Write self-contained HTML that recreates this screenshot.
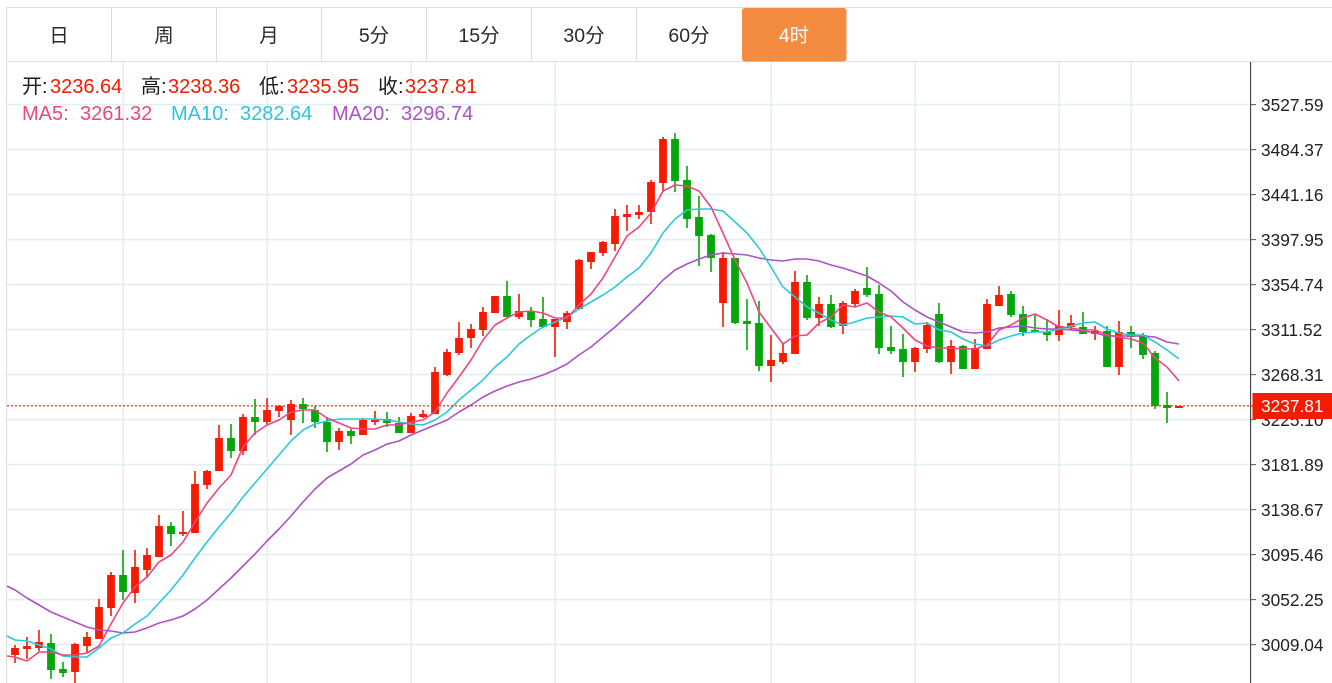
<!DOCTYPE html>
<html>
<head>
<meta charset="utf-8">
<style>
html,body{margin:0;padding:0;background:#fff;width:1332px;height:683px;overflow:hidden}
svg{display:block;font-family:"Liberation Sans","Noto Sans CJK SC",sans-serif}
.t{font-size:19.5px;fill:#2a2a2a;text-anchor:middle}
.a{font-size:17.3px;fill:#222}
.i{font-size:20px}
</style>
</head>
<body>
<svg width="1332" height="683" viewBox="0 0 1332 683" xmlns="http://www.w3.org/2000/svg">
<!-- grid -->
<path fill="none" stroke="#e3edf4" stroke-width="1.6" d="M7 104.6H1250M7 149.6H1250M7 194.6H1250M7 239.6H1250M7 284.6H1250M7 329.6H1250M7 374.6H1250M7 419.6H1250M7 464.6H1250M7 509.6H1250M7 554.6H1250M7 599.6H1250M7 644.6H1250M123.4 62V683M267.4 62V683M411.4 62V683M555.4 62V683M771.4 62V683M915.4 62V683M1059.4 62V683M1131.4 62V683"/>
<!-- tabs frame -->
<path fill="none" stroke="#dedede" stroke-width="1" d="M6 7.5H1332M6 61.5H1332M6.5 7V683"/>
<path fill="none" stroke="#dcdcdc" stroke-width="1" d="M111.5 8V61M216.5 8V61M321.5 8V61M426.5 8V61M531.5 8V61M636.5 8V61"/>
<rect x="742" y="8" width="104.5" height="53.5" rx="3" fill="#f38b41"/>
<text class="t" x="59" y="42">日</text>
<text class="t" x="164" y="42">周</text>
<text class="t" x="269" y="42">月</text>
<text class="t" x="374" y="42">5分</text>
<text class="t" x="479" y="42">15分</text>
<text class="t" x="584" y="42">30分</text>
<text class="t" x="689" y="42">60分</text>
<text class="t" x="794" y="42" style="fill:#fff">4时</text>
<!-- candles -->
<path fill="none" stroke="#f51a00" stroke-width="1.6" d="M15 645V663M27 637V659M39 630V651M75 643V683M87 632V653M99 599V639M111 572V616M135 550V603M147 548V578M159 515V557M183 511V536M195 471V533M207 470V489M219 425V471M243 414V455M267 398V425M279 405V417M291 400V435M339 428V450M363 418V435M375 411V425M411 413V433M423 410V418M435 367V414M447 349V376M459 322V355M471 324V348M483 307V336M519 294V319M555 319V357M567 311V329M579 259V310M591 252V269M603 241V256M615 209V251M627 205V231M639 205V219M651 180V224M663 137V192M723 252V327M771 335V382M783 344V364M795 271V354M819 297V326M843 301V334M855 289V307M915 347V372M927 322V353M951 340V374M975 339V369M987 299V349M999 286V306M1059 310V341M1071 315V330M1095 326V340M1119 321V375"/>
<path fill="none" stroke="#f51a00" stroke-width="7.8" d="M15 648V655M27 646V649M39 642V648M75 644V672M87 637V646M99 607V639M111 575V608M135 567V593M147 555V570M159 526V557M183 532V534M195 484V533M207 471V485M219 438V471M243 417V451M267 410V422M279 406V411M291 404V420M339 431V442M363 420V435M375 420V422M411 416V433M423 414V417M435 372V414M447 352V375M459 338V353M471 329V338M483 312V330M495 296V313M519 311V317M555 319V327M567 313V322M579 260V309M591 252V262M603 242V253M615 216V244M627 214V217M639 212V215M651 182V212M663 139V183M723 258V303M771 360V366M783 353V362M795 282V354M819 304V318M843 303V326M855 291V304M915 348V362M927 325V349M951 346V362M975 348V369M987 304V349M999 295V306M1059 326V335M1071 323V327M1095 331V334M1119 332V367M1179 406V408"/>
<path fill="none" stroke="#04a60a" stroke-width="1.6" d="M51 634V679M63 662V677M123 550V600M171 522V546M231 424V458M255 399V435M303 398V423M315 406V428M327 417V452M351 429V444M387 412V427M399 417V433M507 281V317M531 307V327M543 297V328M675 133V192M687 166V228M699 196V266M711 234V272M735 258V324M747 299V350M759 301V371M807 275V320M831 295V328M867 267V297M879 285V354M891 326V354M903 334V377M939 303V363M963 345V369M1011 291V317M1023 306V336M1035 315V332M1047 319V341M1083 312V334M1107 326V367M1131 326V348M1143 333V359M1155 351V409M1167 392V423"/>
<path fill="none" stroke="#04a60a" stroke-width="7.8" d="M51 643V670M63 669V673M123 575V592M171 526V534M231 438V451M255 417V422M303 404V409M315 410V422M327 422V442M351 431V436M387 419V423M399 423V433M507 296V317M531 311V320M543 319V327M675 139V181M687 180V219M699 217V236M711 235V258M735 258V323M747 321V324M759 323V366M807 282V318M831 304V327M867 288V295M879 294V348M891 347V351M903 349V362M939 314V362M963 346V369M1011 294V315M1023 314V332M1035 330V332M1047 332V335M1083 327V334M1107 331V367M1131 332V337M1143 335V355M1155 353V406M1167 405V408"/>
<!-- moving averages -->
<polyline fill="none" stroke="#ab52c4" stroke-width="1.6" stroke-linejoin="round" points="7,586 15,590 27,598 39,605 51,612 63,617 75,622 87,627 99,630 111,631 123,633 135,632 147,628 159,623 171,620 183,616 195,609 207,600 219,589 231,578 243,566 255,554 267,541 279,529 291,516 303,502 315,489 327,478 339,471 351,464 363,455 375,450 387,444 399,441 411,435 423,430 435,425 447,420 459,412 471,405 483,397 495,391 507,386 519,382 531,379 543,375 555,370 567,364 579,355 591,347 603,337 615,327 627,316 639,305 651,293 663,280 675,270 687,264 699,259 711,255 723,253 735,254 747,255 759,258 771,260 783,261 795,259 807,259 819,261 831,265 843,268 855,272 867,276 879,283 891,291 903,302 915,310 927,317 939,322 951,327 963,332 975,333 987,332 999,328 1011,327 1023,326 1035,328 1047,329 1059,329 1071,330 1083,331 1095,333 1107,336 1119,336 1131,336 1143,336 1155,337 1167,342 1179,344"/>
<polyline fill="none" stroke="#2cc6de" stroke-width="1.6" stroke-linejoin="round" points="7,636 15,640 27,641 39,645 51,649 63,656 75,657 87,657 99,648 111,638 123,633 135,624 147,616 159,603 171,590 183,575 195,558 207,542 219,527 231,513 243,497 255,483 267,469 279,455 291,441 303,430 315,424 327,421 339,419 351,419 363,419 375,419 387,420 399,422 411,424 423,425 435,420 447,412 459,400 471,390 483,380 495,367 507,357 519,344 531,335 543,327 555,322 567,317 579,309 591,302 603,295 615,287 627,277 639,268 651,253 663,233 675,219 687,210 699,209 711,209 723,211 735,222 747,233 759,248 771,267 783,287 795,297 807,307 819,313 831,320 843,325 855,322 867,318 879,317 891,316 903,317 915,324 927,323 939,330 951,332 963,339 975,344 987,346 999,340 1011,336 1023,333 1035,332 1047,332 1059,329 1071,326 1083,323 1095,322 1107,329 1119,333 1131,335 1143,335 1155,342 1167,350 1179,359"/>
<polyline fill="none" stroke="#ef4580" stroke-width="1.6" stroke-linejoin="round" points="7,656 15,657 27,661 39,652 51,652 63,655 75,655 87,653 99,646 111,624 123,603 135,587 147,577 159,562 171,555 183,542 195,522 207,503 219,488 231,475 243,447 255,433 267,425 279,420 291,412 303,410 315,410 327,418 339,423 351,428 363,429 375,429 387,425 399,425 411,422 423,420 435,412 447,393 459,377 471,360 483,340 495,325 507,318 519,312 531,311 543,313 555,318 567,318 579,305 591,294 603,278 615,257 627,236 639,227 651,213 663,191 675,185 687,186 699,191 711,207 723,233 735,260 747,283 759,312 771,328 783,344 795,336 807,335 819,323 831,317 843,305 855,307 867,303 879,312 891,317 903,328 915,340 927,346 939,348 951,348 963,349 975,349 987,345 999,330 1011,325 1023,318 1035,314 1047,320 1059,327 1071,328 1083,330 1095,330 1107,335 1119,337 1131,339 1143,343 1155,358 1167,367 1179,381"/>
<!-- axis -->
<path fill="none" stroke="#3a3a3a" stroke-width="1.1" d="M1250.6 62V683"/>
<path fill="none" stroke="#555" stroke-width="1" d="M1250 104.6H1256M1250 149.6H1256M1250 194.6H1256M1250 239.6H1256M1250 284.6H1256M1250 329.6H1256M1250 374.6H1256M1250 419.6H1256M1250 464.6H1256M1250 509.6H1256M1250 554.6H1256M1250 599.6H1256M1250 644.6H1256"/>
<g class="a">
<text class="a" x="1261" y="111">3527.59</text>
<text class="a" x="1261" y="156">3484.37</text>
<text class="a" x="1261" y="201">3441.16</text>
<text class="a" x="1261" y="246">3397.95</text>
<text class="a" x="1261" y="291">3354.74</text>
<text class="a" x="1261" y="336">3311.52</text>
<text class="a" x="1261" y="381">3268.31</text>
<text class="a" x="1261" y="426">3225.10</text>
<text class="a" x="1261" y="471">3181.89</text>
<text class="a" x="1261" y="516">3138.67</text>
<text class="a" x="1261" y="561">3095.46</text>
<text class="a" x="1261" y="606">3052.25</text>
<text class="a" x="1261" y="651">3009.04</text>
<text class="a" x="1261" y="696">2965.83</text>
</g>
<!-- price line -->
<path fill="none" stroke="#f22a1a" stroke-width="1.3" stroke-dasharray="2 2" d="M7 405.9H1256"/>
<rect x="1252.5" y="393" width="79.5" height="26" fill="#f51a00"/>
<text x="1261" y="412" font-size="17.3" fill="#fff">3237.81</text>
<!-- info -->
<g class="i" fill="#f51a00">
<text x="22" y="93" fill="#1a1a1a">开:</text><text x="50" y="93">3236.64</text>
<text x="141" y="93" fill="#1a1a1a">高:</text><text x="168" y="93">3238.36</text>
<text x="259" y="93" fill="#1a1a1a">低:</text><text x="287" y="93">3235.95</text>
<text x="378" y="93" fill="#1a1a1a">收:</text><text x="405" y="93">3237.81</text>
<text x="22" y="120" fill="#ef4580">MA5:</text><text x="80" y="120" fill="#ef4580">3261.32</text>
<text x="171" y="120" fill="#2cc6de">MA10:</text><text x="240" y="120" fill="#2cc6de">3282.64</text>
<text x="332" y="120" fill="#ab52c4">MA20:</text><text x="401" y="120" fill="#ab52c4">3296.74</text>
</g>
</svg>
</body>
</html>
